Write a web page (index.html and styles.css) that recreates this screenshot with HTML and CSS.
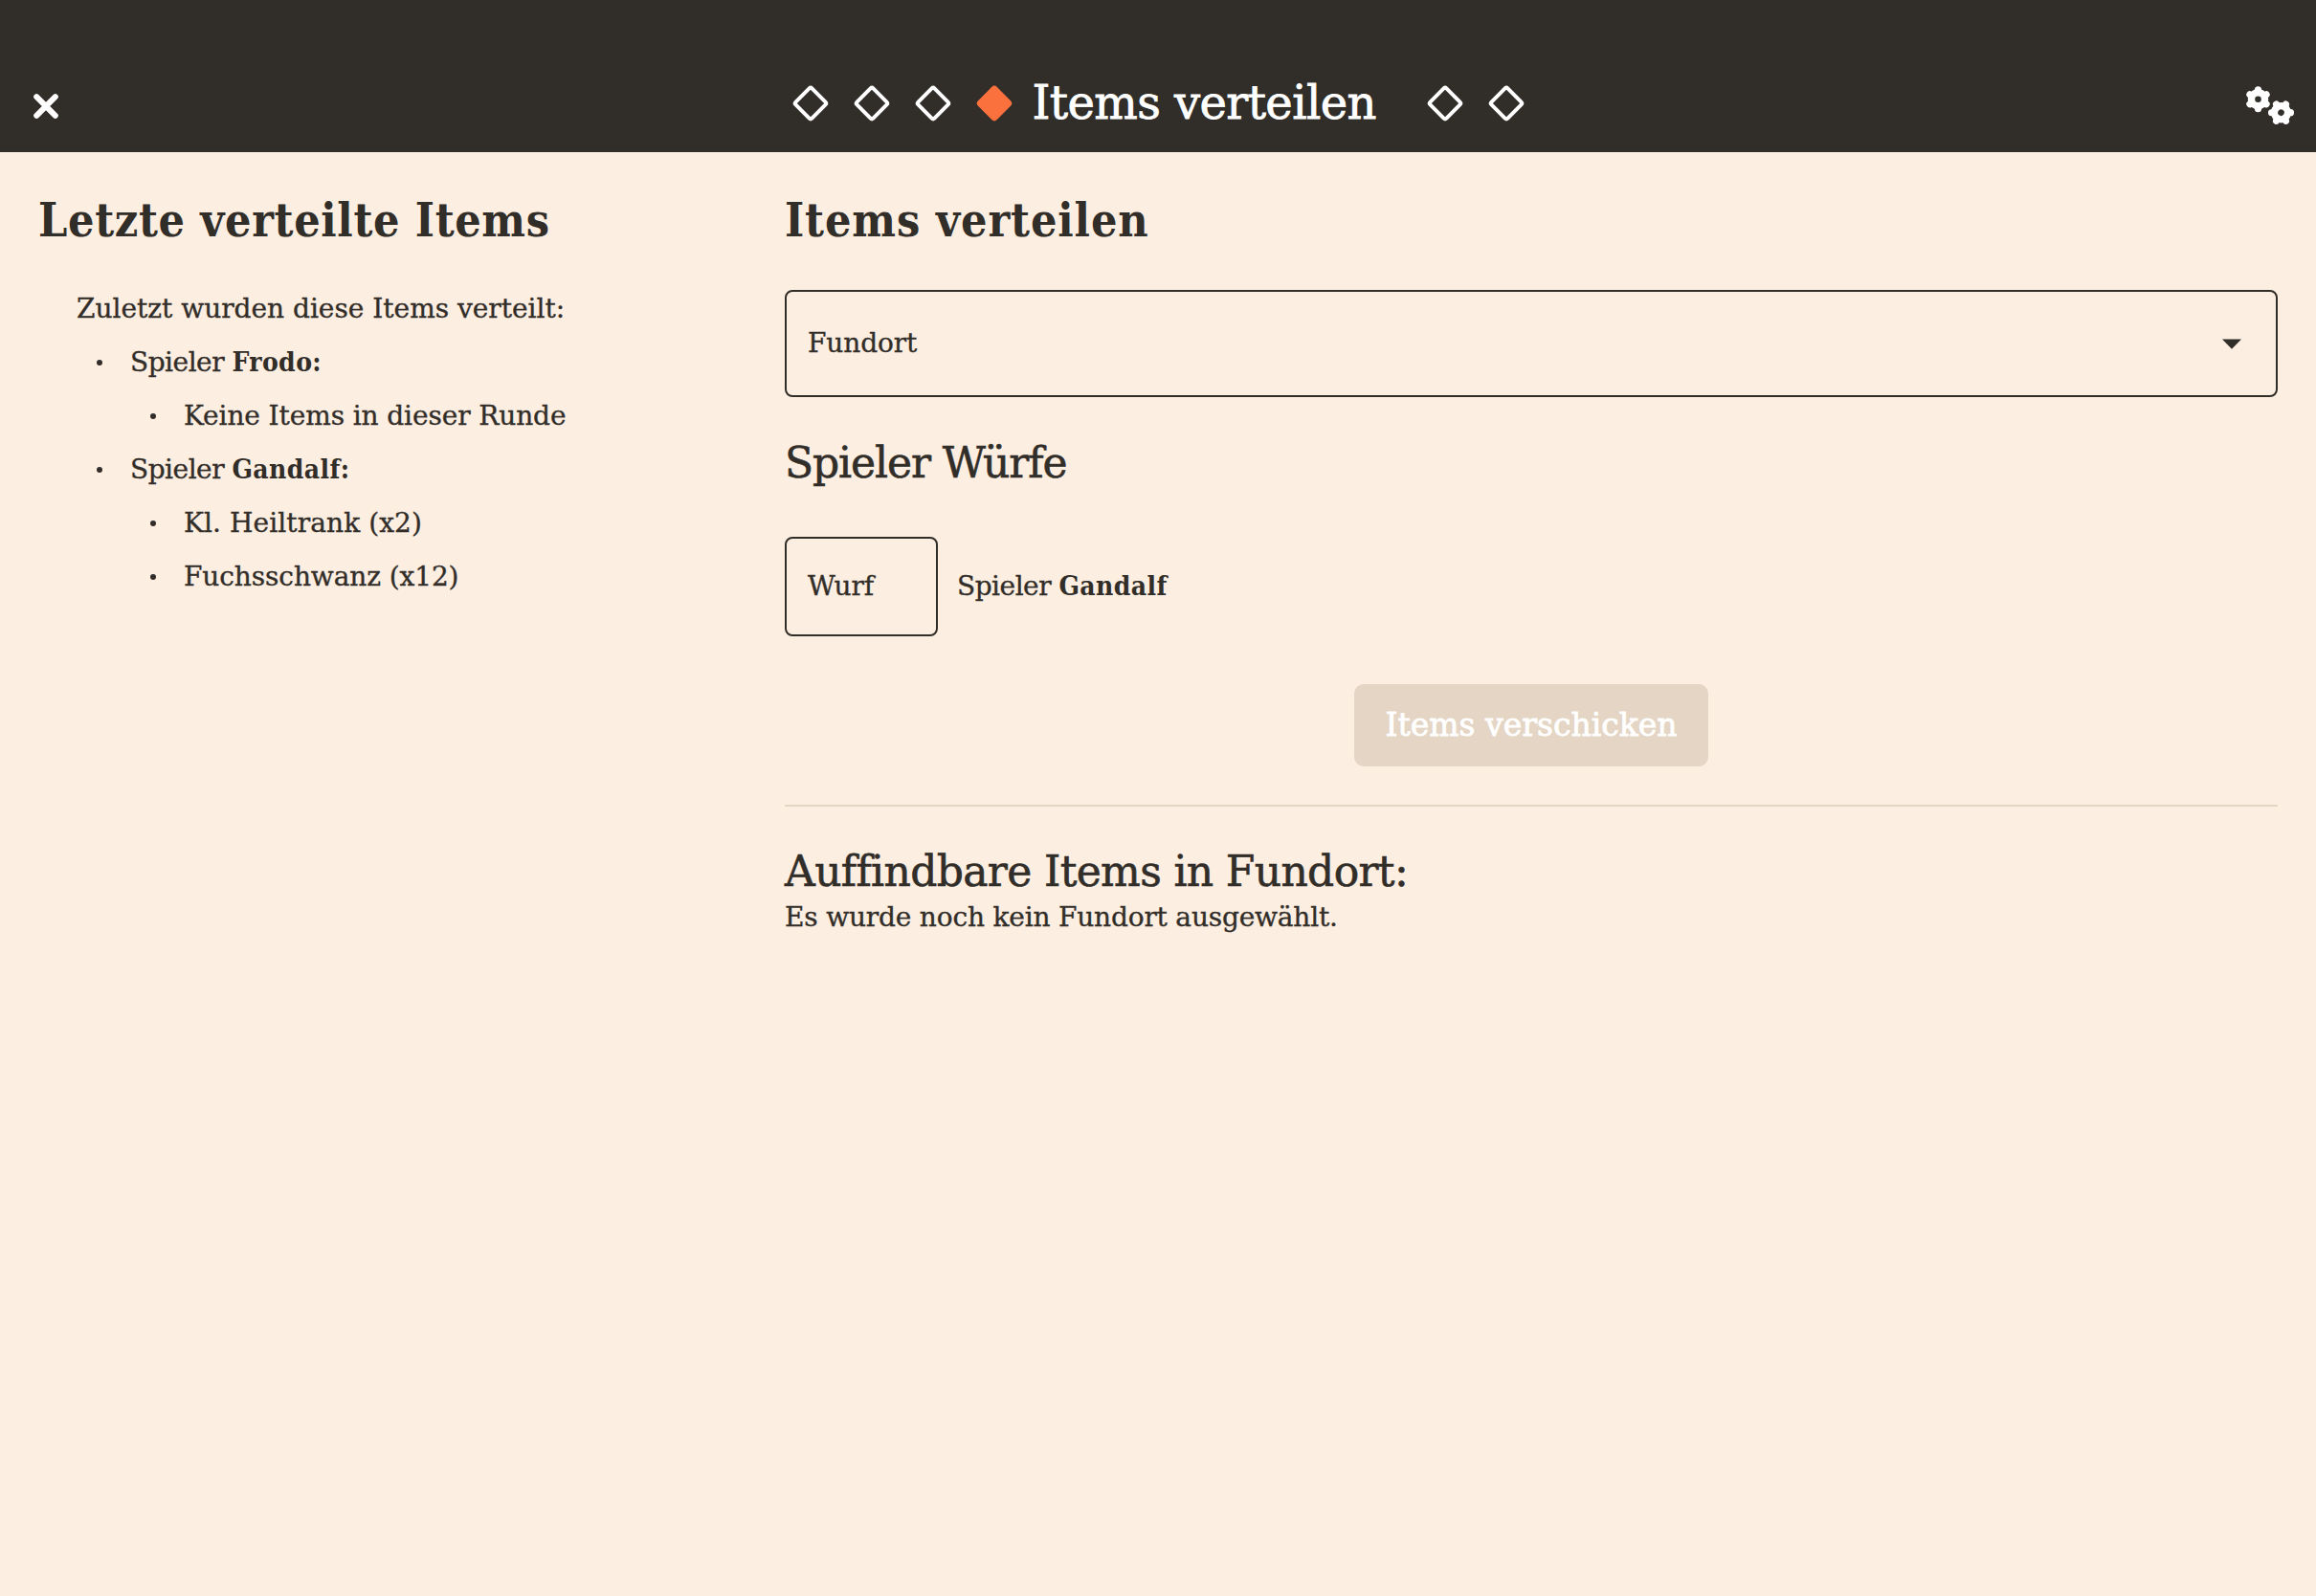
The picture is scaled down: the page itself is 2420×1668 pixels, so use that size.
FILE: index.html
```
<!DOCTYPE html>
<html lang="de">
<head>
<meta charset="utf-8">
<title>Items verteilen</title>
<link rel="stylesheet" href="styles.css">
</head>
<body>
<header class="topbar">
  <button class="icon-button close" aria-label="Schließen">
    <svg width="28" height="28" viewBox="0 0 28 28"><path d="M4.2 4.2 23.8 23.8M23.8 4.2 4.2 23.8" fill="none" stroke="#fff" stroke-width="6" stroke-linecap="round"/></svg>
  </button>
  <nav class="steps">
    <span class="step"></span>
    <span class="step"></span>
    <span class="step"></span>
    <span class="step active"></span>
    <span class="step-title">Items verteilen</span>
    <span class="step"></span>
    <span class="step"></span>
  </nav>
  <button class="icon-button settings" aria-label="Einstellungen">
    <svg width="52" height="42" viewBox="0 0 52 42">
      <defs>
        <g id="gear">
          <circle r="10.7" fill="#fff"/>
          <path d="M0-9.9V9.9M-8.6-5 8.6 5M-8.6 5 8.6-5" stroke="#fff" stroke-width="7.2" stroke-linecap="round"/>
          <circle r="3.3" fill="#312d28"/>
        </g>
      </defs>
      <use href="#gear" x="13.5" y="13.8"/>
      <use href="#gear" transform="translate(37.5 27.7) rotate(30)"/>
    </svg>
  </button>
</header>
<main class="content">
  <section class="history">
    <h1 class="history-title">Letzte verteilte Items</h1>
    <div class="log">
      <p class="row">Zuletzt wurden diese Items verteilt:</p>
      <ul>
        <li><p class="item player">Spieler <b>Frodo:</b></p>
          <ul><li><p class="item">Keine Items in dieser Runde</p></li></ul>
        </li>
        <li><p class="item player">Spieler <b>Gandalf:</b></p>
          <ul>
            <li><p class="item loot">Kl. Heiltrank (x2)</p></li>
            <li><p class="item">Fuchsschwanz (x12)</p></li>
          </ul>
        </li>
      </ul>
    </div>
  </section>
  <section class="distribute">
    <h1>Items verteilen</h1>
    <div class="field select">
      <span>Fundort</span>
      <svg width="20" height="11" viewBox="0 0 20 11"><path d="M0 .4H20L10 10.8Z" fill="#312d28"/></svg>
    </div>
    <h2 class="rolls-title">Spieler Würfe</h2>
    <div class="roll">
      <div class="field roll-input">Wurf</div>
      <p class="player">Spieler <b>Gandalf</b></p>
    </div>
    <button class="send" disabled>Items verschicken</button>
    <hr>
    <h2 class="found-title">Auffindbare Items in Fundort:</h2>
    <p class="hint">Es wurde noch kein Fundort ausgewählt.</p>
  </section>
</main>
</body>
</html>
```
FILE: styles.css
```
* { box-sizing: border-box; margin: 0; padding: 0; }

body {
  min-height: 100vh;
  background: #fdeee2;
  color: #312d28;
  font: 28px/56px "DejaVu Serif", "Liberation Serif", serif;
  -webkit-text-stroke: 0.35px currentColor;
}

b, h1 {
  font-family: "DejaVu Serif Condensed", "DejaVu Serif", serif;
  font-weight: 700;
  -webkit-text-stroke: 0;
}
b { letter-spacing: 0.4px; }

ul { list-style: none; }

.topbar {
  display: grid;
  grid-template-columns: 1fr auto 1fr;
  align-items: center;
  height: 159px;
  padding: 56px 22px 0 34px;
  background: #312d28;
}

.icon-button { display: flex; border: 0; background: none; }
.close { justify-self: start; margin-top: 7px; }
.settings { justify-self: end; margin-top: 7px; }

.steps { display: flex; align-items: center; margin-right: 12px; }

.step {
  width: 28px;
  height: 28px;
  margin: 0 18px;
  border: 4px solid #fff;
  border-radius: 4px;
  transform: rotate(45deg);
}
.step.active { border-color: #fb713e; background: #fb713e; }

.step-title {
  width: 407px;
  margin-bottom: 1px;
  padding-left: 8px;
  color: #fff;
  font-size: 48px;
  line-height: 60px;
  letter-spacing: -0.6px;
  white-space: nowrap;
  -webkit-text-stroke-width: 0.8px;
}

.content { display: grid; grid-template-columns: 740px 1560px; gap: 40px; padding: 41px 40px; }

h1 { font-size: 48px; line-height: 60px; letter-spacing: 0.9px; }
.history-title { letter-spacing: 0.65px; }

.log { margin-top: 35px; padding-left: 40px; }
.item { display: flex; align-items: center; white-space: pre; letter-spacing: -0.1px; }
.loot { letter-spacing: 0.1px; }
.item::before {
  content: "";
  width: 6px;
  height: 6px;
  margin: 0 29px 0 21px;
  border-radius: 50%;
  background: #312d28;
}
li ul { padding-left: 56px; }

.field {
  display: flex;
  align-items: center;
  border: 2px solid #312d28;
  border-radius: 8px;
  padding: 0 36px 0 22px;
  letter-spacing: -0.1px;
}
.select { justify-content: space-between; height: 112px; margin-top: 43px; }

h2 { font-size: 44px; line-height: 56px; font-weight: 400; -webkit-text-stroke-width: 0.6px; }
.rolls-title { margin-top: 41px; letter-spacing: -1.1px; }

.roll { display: flex; align-items: center; gap: 20px; margin-top: 49px; }
.roll-input { width: 160px; height: 104px; }
.player { letter-spacing: -0.5px; }

.send {
  display: block;
  width: 370px;
  height: 86px;
  margin: 50px auto 0;
  border: 0;
  border-radius: 10px;
  background: #e4d5c4;
  color: #fff;
  font: 33px/86px "DejaVu Serif", serif;
  -webkit-text-stroke: 0.8px #fff;
}

hr { height: 2px; margin-top: 40px; border: 0; background: #e4d6c3; }

.found-title { margin-top: 40px; letter-spacing: -0.65px; }
.hint { margin-top: 2px; line-height: 36px; letter-spacing: -0.18px; }
```
